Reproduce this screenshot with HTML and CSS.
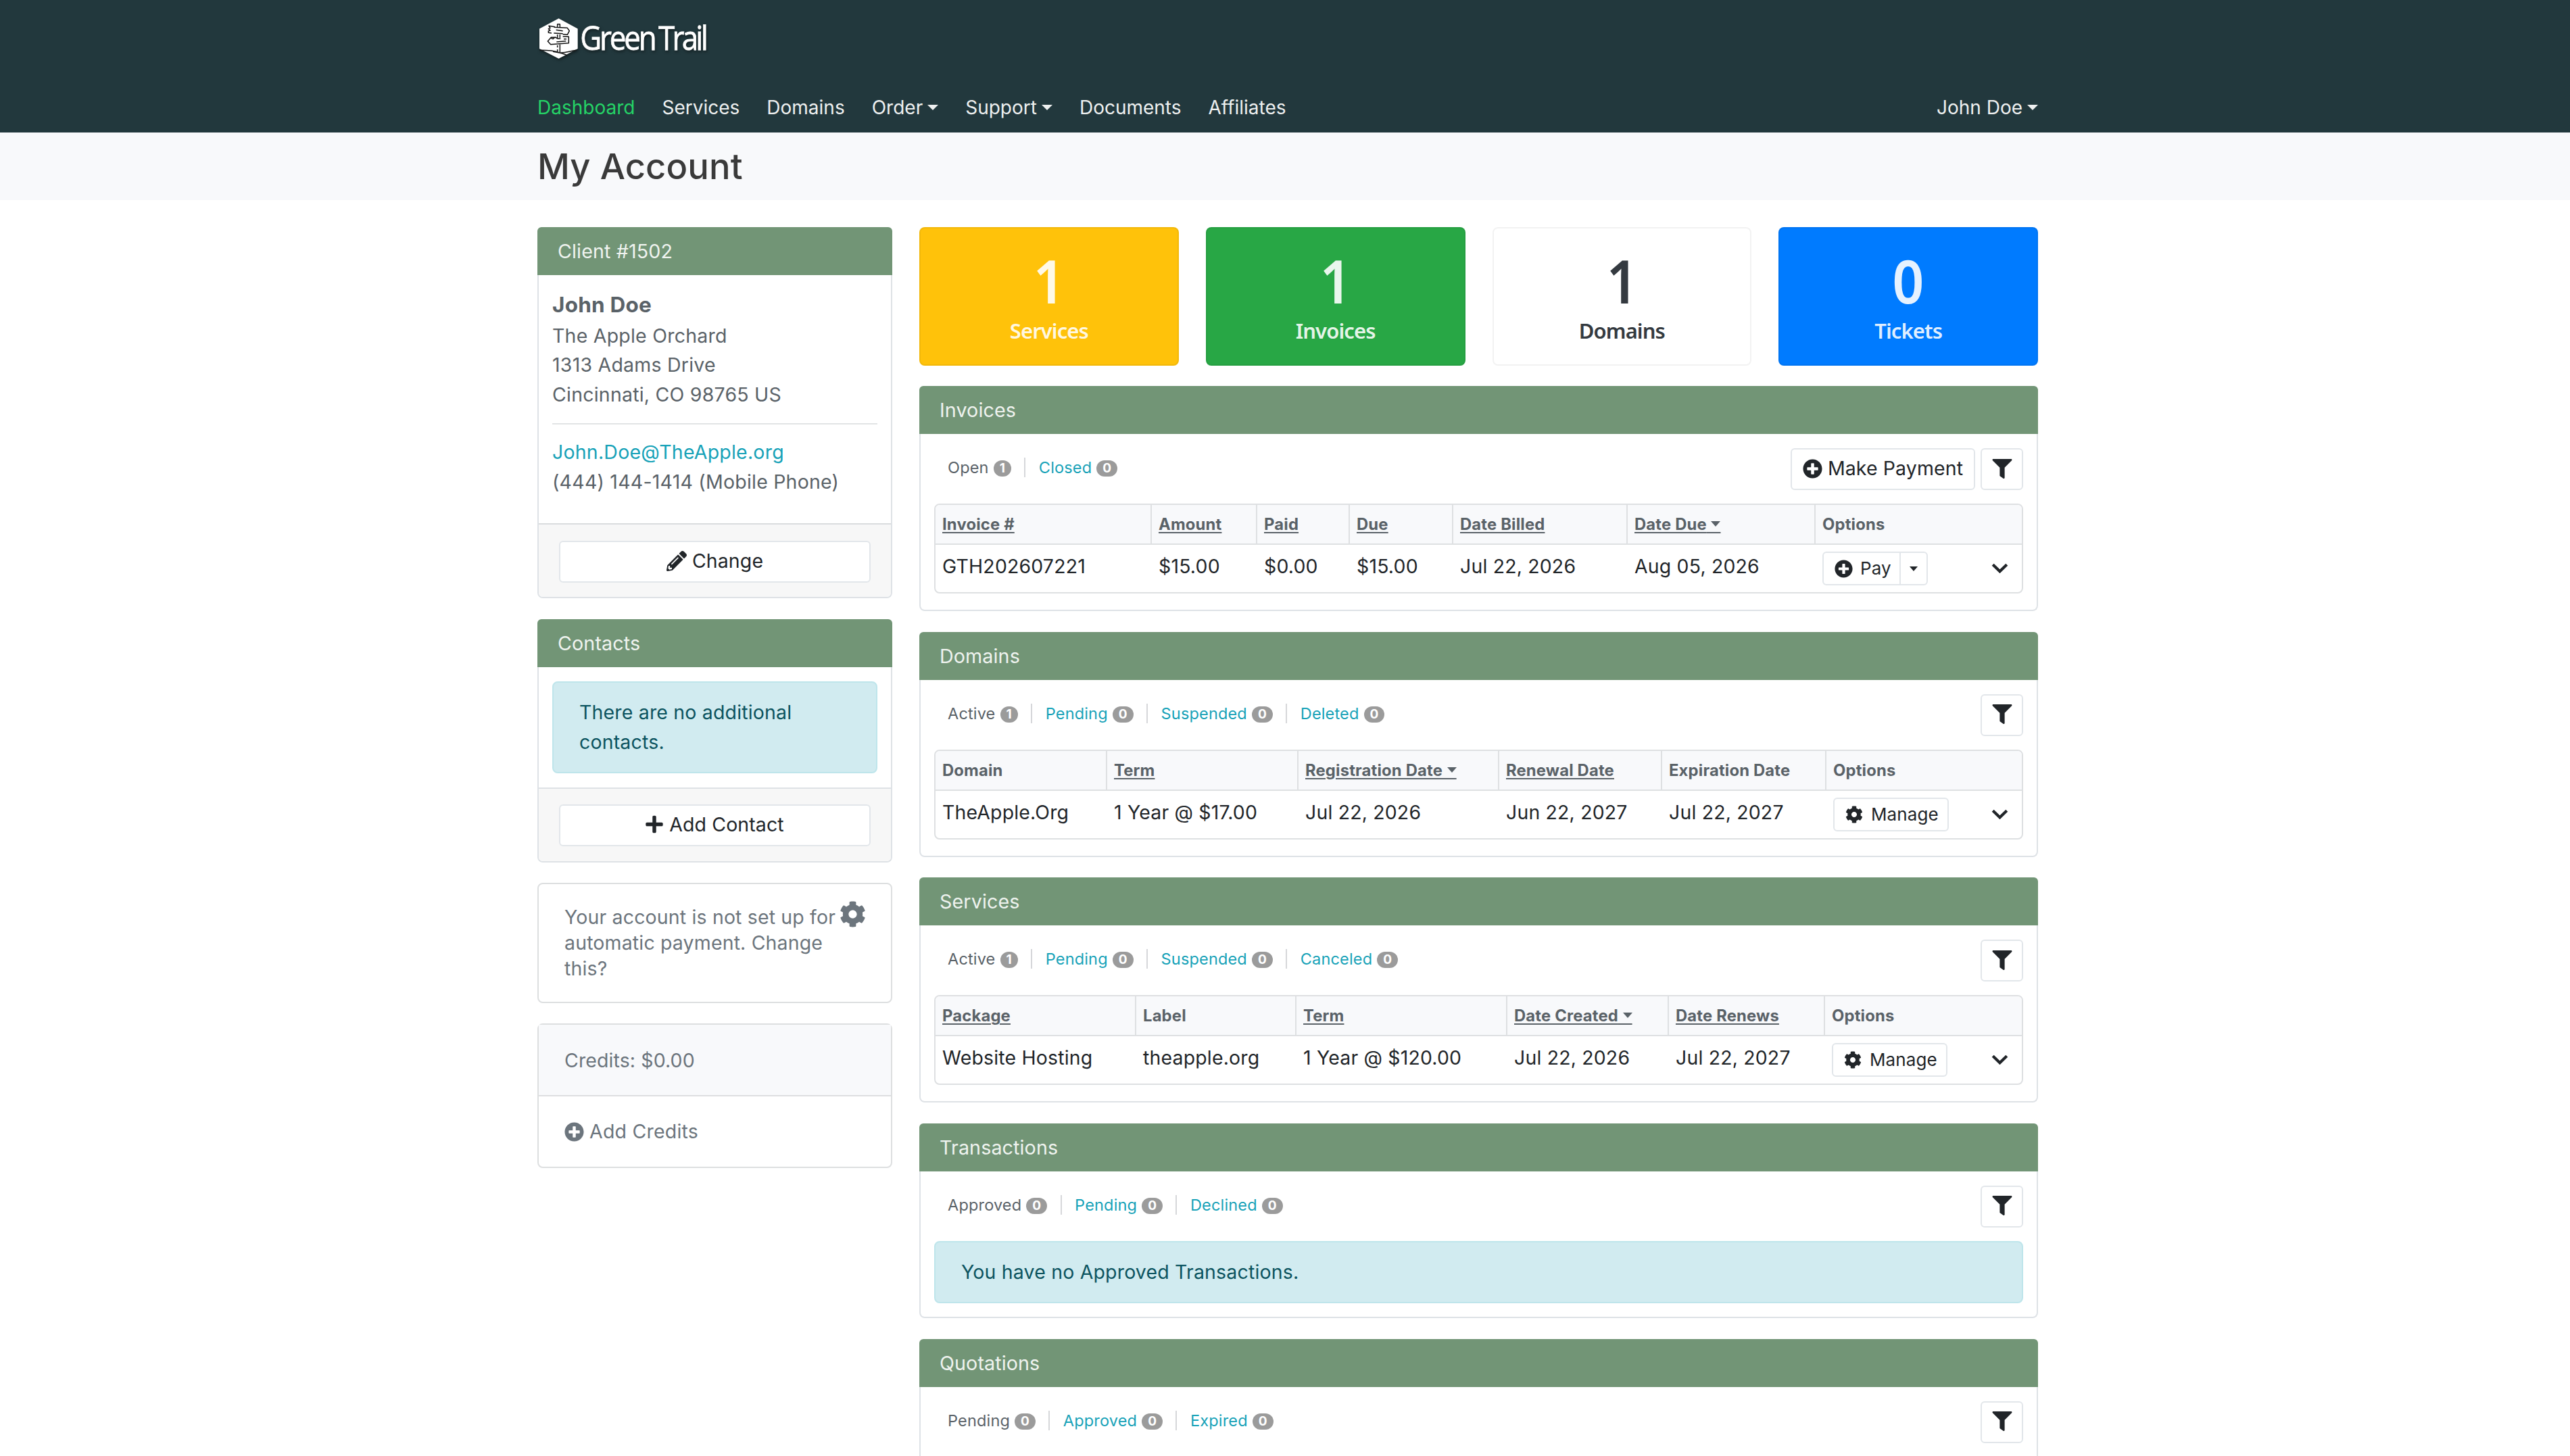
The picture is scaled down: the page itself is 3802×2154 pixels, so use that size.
FILE: index.html
```html
<!DOCTYPE html>
<html lang="en">
<head>
<meta charset="utf-8">
<title>My Account</title>
<link rel="stylesheet" href="styles.css">
</head>
<body>
<svg class="sprite" aria-hidden="true">
  <symbol id="i-plus-circle" viewBox="0 0 512 512"><path d="M256 8C119 8 8 119 8 256s111 248 248 248 248-111 248-248S393 8 256 8zm144 276c0 6.600-5.400 12-12 12h-92v92c0 6.600-5.400 12-12 12h-56c-6.600 0-12-5.400-12-12v-92h-92c-6.600 0-12-5.400-12-12v-56c0-6.600 5.400-12 12-12h92v-92c0-6.600 5.400-12 12-12h56c6.600 0 12 5.400 12 12v92h92c6.600 0 12 5.400 12 12v56z"/></symbol>
  <symbol id="i-plus" viewBox="0 0 448 512"><path d="M416 208H272V64c0-17.670-14.330-32-32-32h-32c-17.670 0-32 14.330-32 32v144H32c-17.670 0-32 14.330-32 32v32c0 17.670 14.330 32 32 32h144v144c0 17.670 14.330 32 32 32h32c17.670 0 32-14.330 32-32V304h144c17.670 0 32-14.330 32-32v-32c0-17.670-14.330-32-32-32z"/></symbol>
  <symbol id="i-cog" viewBox="0 0 512 512"><path d="M487.400 315.700l-42.600-24.600c4.300-23.200 4.300-47 0-70.200l42.600-24.600c4.900-2.800 7.100-8.600 5.500-14-11.100-35.600-30-67.800-54.700-94.600-3.800-4.100-10-5.100-14.800-2.300L380.800 110c-17.900-15.400-38.500-27.300-60.800-35.100V25.800c0-5.600-3.900-10.500-9.400-11.700-36.700-8.200-74.300-7.800-109.200 0-5.500 1.200-9.400 6.100-9.400 11.700V75c-22.200 7.900-42.800 19.800-60.800 35.100L88.700 85.500c-4.900-2.800-11-1.900-14.800 2.300-24.700 26.700-43.600 58.900-54.700 94.600-1.700 5.400.6 11.200 5.500 14L67.300 221c-4.300 23.200-4.300 47 0 70.200l-42.600 24.600c-4.900 2.800-7.100 8.600-5.500 14 11.100 35.600 30 67.800 54.700 94.600 3.800 4.100 10 5.100 14.800 2.300l42.600-24.600c17.900 15.400 38.500 27.300 60.800 35.100v49.200c0 5.600 3.900 10.500 9.400 11.700 36.700 8.200 74.300 7.800 109.200 0 5.500-1.200 9.400-6.100 9.400-11.700v-49.200c22.200-7.900 42.800-19.800 60.800-35.100l42.600 24.600c4.900 2.800 11 1.900 14.800-2.300 24.700-26.700 43.600-58.900 54.700-94.600 1.500-5.500-.7-11.300-5.600-14.100zM256 336c-44.100 0-80-35.900-80-80s35.900-80 80-80 80 35.900 80 80-35.900 80-80 80z"/></symbol>
  <symbol id="i-pencil" viewBox="0 0 512 512"><path d="M497.900 142.100l-46.100 46.100c-4.700 4.700-12.300 4.700-17 0l-111-111c-4.700-4.700-4.700-12.300 0-17l46.100-46.100c18.700-18.700 49.100-18.700 67.900 0l60.100 60.100c18.800 18.700 18.800 49.100 0 67.900zM284.200 99.800L21.600 362.400.4 483.900c-2.900 16.400 11.400 30.600 27.800 27.800l121.500-21.300 262.600-262.600c4.700-4.700 4.700-12.300 0-17l-111-111c-4.800-4.700-12.400-4.700-17.100 0zM124.100 339.900c-5.500-5.500-5.500-14.300 0-19.800l154-154c5.500-5.500 14.300-5.500 19.800 0s5.500 14.300 0 19.800l-154 154c-5.500 5.500-14.300 5.500-19.800 0zM88 424h48v36.300l-64.500 11.300-31.100-31.100L51.700 376H88v48z"/></symbol>
  <symbol id="i-filter" viewBox="0 0 512 512"><path d="M487.976 0H24.028C2.710 0-8.047 25.866 7.058 40.971L192 225.941V432c0 7.831 3.821 15.170 10.237 19.662l80 55.980C298.020 518.690 320 507.493 320 487.980V225.941l184.947-184.970C520.021 25.896 509.338 0 487.976 0z"/></symbol>
  <symbol id="i-chevron" viewBox="0 0 25 15"><path d="M2.200 2.200L12.500 12.300L22.800 2.200" fill="none" stroke="currentColor" stroke-width="4.200"/></symbol>
</svg>

<header class="top">
  <div class="wrap">
    <svg class="logo" viewBox="0 0 270 80" role="img">
      <g class="logo-shadow">
        <path d="M36.500 12.300L64.700 27.500V57L36.500 71.700L8 57V27.500Z" fill="#fff"/>
        <g transform="scale(.3333)" fill="none" stroke="#111" stroke-width="4.500" stroke-linejoin="round">
          <path d="M104 77V62H115V77M93 74L66 70L72 80L64 83L72 90L64 92V100L78 102M88 76L148 79L157 92L148 109L128 107M88 102L128 104M98 88L128 92"/>
          <path d="M104 108V123M115 108V123M94 121H76L61 138L74 152L154 146V118H128M76 124L84 128L94 120L106 127H118M100 141L142 137M132 128H144"/>
          <path d="M104 156V166M104 174V186M115 152V186M26 178C56 178 90 180 112 188C136 192 156 182 188 178M84 184C108 188 130 192 146 200"/>
        </g>
        <g transform="scale(.88 1)">
          <text class="logo-text" x="77.500" y="59.300" textLength="129" lengthAdjust="spacing">Green</text>
          <text class="logo-text" x="209" y="59.300" textLength="84" lengthAdjust="spacing">Trail</text>
        </g>
      </g>
    </svg>
    <nav class="nav">
      <a class="active">Dashboard</a><a>Services</a><a>Domains</a><a class="drop">Order</a><a class="drop">Support</a><a>Documents</a><a>Affiliates</a>
      <a class="drop user">John Doe</a>
    </nav>
  </div>
</header>

<div class="title-bar"><div class="wrap"><h1>My Account</h1></div></div>

<div class="wrap page">
  <aside class="side">
    <section class="card">
      <h2>Client #1502</h2>
      <div class="client">
        <strong>John Doe</strong>
        <div>The Apple Orchard</div>
        <div>1313 Adams Drive</div>
        <div>Cincinnati, CO 98765 US</div>
        <hr>
        <div><a class="link">John.Doe@TheApple.org</a></div>
        <div>(444) 144-1414 (Mobile Phone)</div>
      </div>
      <div class="foot"><a class="btn wide"><svg class="ic30"><use href="#i-pencil"/></svg>Change</a></div>
    </section>

    <section class="card">
      <h2>Contacts</h2>
      <div class="contacts"><div class="alert">There are no additional contacts.</div></div>
      <div class="foot light"><a class="btn wide"><svg class="ic26"><use href="#i-plus"/></svg>Add Contact</a></div>
    </section>

    <section class="box autopay">
      <p>Your account is not set up for automatic payment. Change this?</p>
      <svg><use href="#i-cog"/></svg>
    </section>

    <section class="box credits">
      <div class="sum">Credits: $0.00</div>
      <div class="add"><svg><use href="#i-plus-circle"/></svg>Add Credits</div>
    </section>
  </aside>

  <main class="main">
    <div class="tiles">
      <div class="tile yellow"><b>1</b><span>Services</span></div>
      <div class="tile green"><b>1</b><span>Invoices</span></div>
      <div class="tile plain"><b>1</b><span>Domains</span></div>
      <div class="tile blue"><b>0</b><span>Tickets</span></div>
    </div>

    <section class="card">
      <h2>Invoices</h2>
      <div class="body">
        <div class="bar">
          <div class="tabs"><a class="on">Open<i>1</i></a><a>Closed<i>0</i></a></div>
          <a class="btn pay-all"><svg><use href="#i-plus-circle"/></svg>Make Payment</a>
          <a class="btn filter"><svg><use href="#i-filter"/></svg></a>
        </div>
        <table>
          <colgroup><col class="w322"><col class="w156"><col class="w137"><col class="w153"><col class="w258"><col class="w278"><col></colgroup>
          <tr><th><u>Invoice #</u></th><th><u>Amount</u></th><th><u>Paid</u></th><th><u>Due</u></th><th><u>Date Billed</u></th><th><u class="sort">Date Due</u></th><th>Options</th></tr>
          <tr><td>GTH202607221</td><td>$15.00</td><td>$0.00</td><td>$15.00</td><td>Jul 22, 2026</td><td>Aug 05, 2026</td>
            <td><div class="opts"><span class="btn small split"><span><svg><use href="#i-plus-circle"/></svg>Pay</span><i class="caret"></i></span><svg class="chev"><use href="#i-chevron"/></svg></div></td></tr>
        </table>
      </div>
    </section>

    <section class="card">
      <h2>Domains</h2>
      <div class="body">
        <div class="bar">
          <div class="tabs"><a class="on">Active<i>1</i></a><a>Pending<i>0</i></a><a>Suspended<i>0</i></a><a>Deleted<i>0</i></a></div>
          <a class="btn filter"><svg><use href="#i-filter"/></svg></a>
        </div>
        <table>
          <colgroup><col class="w256"><col class="w283"><col class="w297"><col class="w241"><col class="w243"><col></colgroup>
          <tr><th>Domain</th><th><u>Term</u></th><th><u class="sort">Registration Date</u></th><th><u>Renewal Date</u></th><th>Expiration Date</th><th>Options</th></tr>
          <tr><td>TheApple.Org</td><td>1 Year @ $17.00</td><td>Jul 22, 2026</td><td>Jun 22, 2027</td><td>Jul 22, 2027</td>
            <td><div class="opts"><span class="btn small"><svg><use href="#i-cog"/></svg>Manage</span><svg class="chev"><use href="#i-chevron"/></svg></div></td></tr>
        </table>
      </div>
    </section>

    <section class="card">
      <h2>Services</h2>
      <div class="body">
        <div class="bar">
          <div class="tabs"><a class="on">Active<i>1</i></a><a>Pending<i>0</i></a><a>Suspended<i>0</i></a><a>Canceled<i>0</i></a></div>
          <a class="btn filter"><svg><use href="#i-filter"/></svg></a>
        </div>
        <table>
          <colgroup><col class="w299"><col class="w237"><col class="w312"><col class="w239"><col class="w231"><col></colgroup>
          <tr><th><u>Package</u></th><th>Label</th><th><u>Term</u></th><th><u class="sort">Date Created</u></th><th><u>Date Renews</u></th><th>Options</th></tr>
          <tr><td>Website Hosting</td><td>theapple.org</td><td>1 Year @ $120.00</td><td>Jul 22, 2026</td><td>Jul 22, 2027</td>
            <td><div class="opts"><span class="btn small"><svg><use href="#i-cog"/></svg>Manage</span><svg class="chev"><use href="#i-chevron"/></svg></div></td></tr>
        </table>
      </div>
    </section>

    <section class="card">
      <h2>Transactions</h2>
      <div class="body short">
        <div class="bar">
          <div class="tabs"><a class="on">Approved<i>0</i></a><a>Pending<i>0</i></a><a>Declined<i>0</i></a></div>
          <a class="btn filter"><svg><use href="#i-filter"/></svg></a>
        </div>
        <div class="alert">You have no Approved Transactions.</div>
      </div>
    </section>

    <section class="card last">
      <h2>Quotations</h2>
      <div class="body">
        <div class="bar">
          <div class="tabs"><a class="on">Pending<i>0</i></a><a>Approved<i>0</i></a><a>Expired<i>0</i></a></div>
          <a class="btn filter"><svg><use href="#i-filter"/></svg></a>
        </div>
      </div>
    </section>
  </main>
</div>
</body>
</html>
```
FILE: styles.css
```css
* { box-sizing: border-box; }
html, body { margin: 0; height: 2154px; overflow: hidden; }
body {
  background: #fff;
  color: #212529;
  font: 400 28.500px/44px Inter, "Liberation Sans", sans-serif;
}
svg { display: block; flex: none; fill: currentColor; }
.sprite { position: absolute; width: 0; height: 0; }
.wrap { width: 2220px; margin-left: 795px; }

/* Header */
.top { height: 196px; background: #22383d; }
.logo { width: 270px; height: 80px; margin-left: -5px; position: relative; top: 15px; overflow: visible; }
.logo-shadow { filter: drop-shadow(1px 2px 2px rgba(0,0,0,.5)); }
.logo-text { font: 400 50px "Open Sans", "Noto Sans", sans-serif; fill: #fff; stroke: #fff; stroke-width: .8px; }
.nav { display: flex; gap: 40px; padding-top: 57px; font-size: 28px; color: #eef0f0; }
.nav .active { color: #25d366; }
.nav .drop::after {
  content: ""; display: inline-block; margin-left: 7px; vertical-align: 6px;
  border: 8px solid transparent; border-top-color: currentColor; border-bottom: 0;
}
.nav .user { margin-left: auto; }
.title-bar { height: 100px; background: #f8f9fb; }
h1 { margin: 0; font-size: 52.500px; line-height: 100px; font-weight: 450; color: #3a3a3a; letter-spacing: .1px; }

/* Layout */
.page { display: flex; gap: 40px; padding-top: 40px; align-items: flex-start; }
.side { width: 525px; letter-spacing: .22px; }
.main { width: 1655px; }

/* Cards */
.card { border: 2px solid #dee2e6; border-top: 0; border-radius: 8px; margin-bottom: 30.670px; }
.card h2 {
  margin: 0 -2px; height: 71px; padding-left: 30px; border-radius: 6px 6px 0 0;
  background: #729576; color: #eff3ef; font-size: 28.700px; line-height: 72px; font-weight: 400;
  letter-spacing: .1px;
}
.client { height: 367px; padding: 22px 20px 0; color: #5a6268; line-height: 43.500px; }
.client strong { font-size: 31.500px; font-weight: 700; display: block; margin-bottom: 2px; }
.client hr { border: 0; border-top: 2px solid #e2e4e5; margin: 21px 0 19px; }
.link { color: #17a2b8; }
.foot { border-top: 2px solid #dadcde; background: #f7f7f7; height: 109px; padding: 24px 30px 0; border-radius: 0 0 6px 6px; }
.light { border-top-color: #dee2e6; padding-top: 23px; }
.btn {
  display: flex; align-items: center; justify-content: center; padding-bottom: 2px;
  border: 2px solid #e2e6ea; border-radius: 6px; background: #fff; height: 62px; letter-spacing: .1px;
}
.ic30 { width: 30px; height: 30px; margin-right: 8px; }
.ic26 { width: 26px; height: 29px; margin-right: 9px; }
.contacts { height: 178px; padding: 21px 20px 0; }
.alert { border: 2px solid #bee5eb; border-radius: 8px; background: #d1ebf0; color: #0c5460; padding: 22px 38px; letter-spacing: .17px; }
.contacts .alert { height: 136px; }
.box { border: 2px solid #dddfe0; border-radius: 8px; color: #6c757d; }
.autopay { height: 178px; margin-bottom: 30px; padding: 27px 31px 0 38px; display: flex; }
.autopay p { margin: 0; line-height: 38px; width: 407px; padding-top: 3px; letter-spacing: .15px; }
.autopay svg { width: 39px; height: 39px; margin-top: -2px; }
.credits { height: 214px; }
.credits .sum { height: 106px; border-bottom: 2px solid #dddfe0; background: #f8f9fb; padding: 31px 38px; letter-spacing: .1px; }
.credits .add { display: flex; align-items: center; padding: 30px 38px; }
.credits svg { width: 29px; height: 29px; margin-right: 8px; }

/* Tiles */
.tiles { display: grid; grid-template-columns: repeat(4, 1fr); gap: 40px; margin-bottom: 30px; }
.tile {
  height: 205px; border: 2px solid rgba(0,0,0,.05); border-radius: 8px; text-align: center; padding-top: 32px;
  color: rgba(255,255,255,.9); font-family: "Noto Sans", "Open Sans", sans-serif;
}
.tile b { display: block; font-size: 89px; font-weight: 600; line-height: 90px; transform: scaleX(.92); }
.tile span { display: block; margin-top: 12px; font-size: 31px; line-height: 34px; font-weight: 600; letter-spacing: -.9px; }
.yellow { background: #ffc20a; }
.green { background: #28a745; }
.plain { color: #343a40; }
.blue { background: #007bff; }

/* Toolbar */
.body { padding: 21px 20px 24px; }
.short { padding-bottom: 20px; }
.last { height: 173px; border-bottom: 0; border-radius: 8px 8px 0 0; margin: 0; }
.last .body { padding-bottom: 0; }
.last .bar { margin: 0; }
.bar { display: flex; margin-bottom: 20px; }
.tabs { display: flex; margin-right: auto; padding: 14px 0 0 20px; font-size: 23.500px; letter-spacing: .17px; line-height: 30px; color: #17a2b8; }
.tabs a { display: flex; height: 29px; align-items: center; padding-top: 1px; }
.tabs a + a { border-left: 2px solid #d6d7da; margin-left: 19.500px; padding-left: 19.500px; }
.tabs .on { color: #5a6268; }
.tabs i {
  font-style: normal; font-weight: 700; font-size: 19px; line-height: 24px; color: #fff; letter-spacing: 0;
  background: #9b9b9b; border-radius: 12px; padding: 0 9px; margin: 2px 0 0 7px;
}
.pay-all { width: 273px; margin-right: 8px; }
.pay-all svg { width: 29px; height: 29px; margin-right: 8px; }
.filter { width: 63px; }
.filter svg { width: 30px; height: 29px; }

/* Tables */
table {
  width: 100%; table-layout: fixed; border-collapse: separate; border-spacing: 0;
  border: 2px solid #dee0e2; border-radius: 8px; overflow: hidden;
}
th, td { text-align: left; vertical-align: top; padding: 0 0 0 10px; white-space: nowrap; }
th {
  height: 59px; padding-top: 11px; line-height: 35px; font-size: 23.800px; font-weight: 700; letter-spacing: .17px;
  background: #f8f9fb; color: #5a6268; border-right: 2px solid #dee0e2; border-bottom: 2px solid #dee0e2;
}
th:last-child { border-right: 0; }
td { height: 70px; padding-top: 10px; font-size: 28.400px; letter-spacing: .2px; }
u { text-decoration: underline; text-decoration-thickness: 2px; text-underline-offset: 3px; }
.sort::after {
  content: "\00a0"; letter-spacing: 15px;
  background: url("data:image/svg+xml,%3Csvg xmlns='http://www.w3.org/2000/svg' viewBox='0 0 14 8'%3E%3Cpath d='M0 0h14L7 8z' fill='%235a6268'/%3E%3C/svg%3E") right 10px / 14px 8px no-repeat;
}
.w137 { width: 137px; } .w153 { width: 153px; } .w156 { width: 156px; } .w231 { width: 231px; }
.w237 { width: 237px; } .w239 { width: 239px; } .w241 { width: 241px; } .w243 { width: 243px; }
.w256 { width: 254px; } .w258 { width: 258px; } .w278 { width: 278px; } .w283 { width: 283px; }
.w297 { width: 297px; } .w299 { width: 297px; } .w312 { width: 312px; } .w322 { width: 320px; }
.opts { display: flex; justify-content: space-between; padding-right: 20px; }
.small { height: 50px; font-size: 26px; padding: 0 13px 0 16px; line-height: 46px; }
.small svg { width: 26px; height: 26px; margin-right: 12px; }
.split { padding: 0; }
.split > span { display: flex; align-items: center; padding: 0 12px 0 16px; border-right: 2px solid #e2e6ea; }
.split svg { width: 27px; height: 27px; margin-right: 11px; }
.split .caret { margin: 0 13px; border: 6.500px solid transparent; border-top: 7px solid #212529; border-bottom: 0; }
.chev { width: 25px; height: 15px; margin-top: 17px; }
```
